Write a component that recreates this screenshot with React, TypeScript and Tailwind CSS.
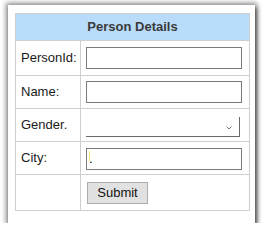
import React from 'react';

const font = { fontFamily: '"Liberation Sans", Arial, sans-serif' };

function Row({
  label,
  h,
  last,
  children
}: {
  label: string;
  h: string;
  last?: boolean;
  children?: React.ReactNode;
}) {
  return (
    <div className={`flex ${h} ${last ? '' : 'border-b border-[#cfcfcf]'}`}>
      <div className="w-[65px] shrink-0 flex items-center pl-[5px] text-[13px] text-[#1a1a1a] border-r border-[#cfcfcf]">
        {label}
      </div>
      <div className="flex-1 flex items-center pl-[5px]">{children}</div>
    </div>
  );
}

export default function App() {
  return (
    <div className="pt-[5px] pl-[8px]" style={font}>
      <div className="w-[247px] h-[218px] bg-white pt-[8px] pl-[7px] shadow-[0_0_5px_2px_rgba(0,0,0,0.45),2px_3px_4px_rgba(0,0,0,0.5)]">
        <div className="w-[235px] border border-[#cfcfcf]">
          <div className="h-[27px] bg-[#b9dcfb] border-b border-[#cfcfcf] flex items-center justify-center text-[13px] font-bold text-[#3a3a3a]">
            Person Details
          </div>
          <Row label="PersonId:" h="h-[35px]">
            <input className="w-[156px] h-[22px] border border-[#7a7a7a] bg-white outline-none" />
          </Row>
          <Row label="Name:" h="h-[33px]">
            <input className="w-[156px] h-[22px] border border-[#7a7a7a] bg-white outline-none" />
          </Row>
          <Row label="Gender." h="h-[33px]">
            <div className="relative w-[154px] h-[20px] mt-[4px] border-b border-r border-[#6a6a6a]">
              <svg
                className="absolute right-[7px] top-[9px]"
                width="6"
                height="4"
                viewBox="0 0 6 4"
                fill="none"
                stroke="#777"
                strokeWidth="1"
              >
                <path d="M0.5 0.5 L3 3 L5.5 0.5" />
              </svg>
            </div>
          </Row>
          <Row label="City:" h="h-[33px]">
            <div className="relative">
              <input
                defaultValue="."
                className="w-[156px] h-[22px] border border-[#7a7a7a] bg-white outline-none pl-[2px] text-[13px]"
              />
              <span className="absolute left-[3px] top-[5px] w-px h-[10px] bg-[#f3e46a]" />
            </div>
          </Row>
          <Row label="" h="h-[35px]" last>
            <button className="w-[61px] h-[22px] ml-px bg-[#e1e1e1] border border-[#adadad] text-[13px] text-[#111] leading-none">
              Submit
            </button>
          </Row>
        </div>
      </div>
    </div>
  );
}
